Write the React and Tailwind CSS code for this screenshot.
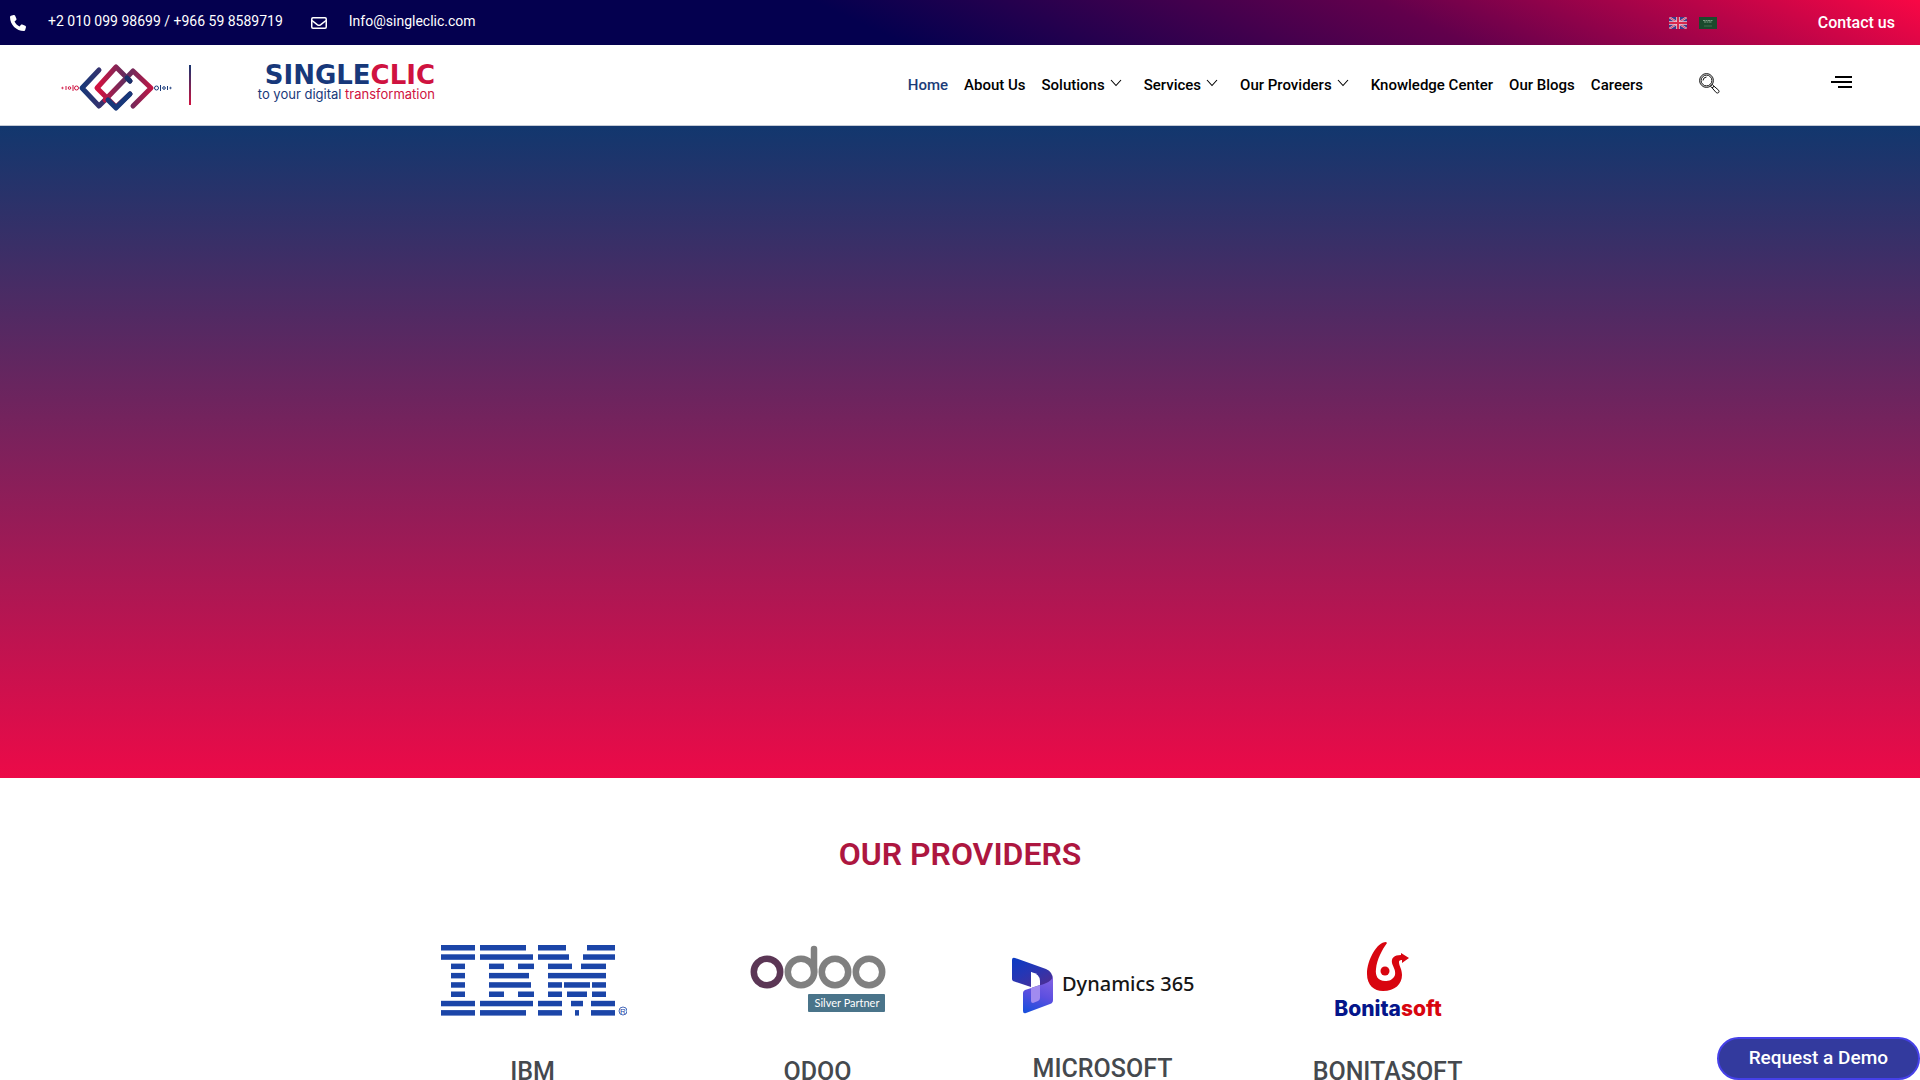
import { useState } from 'react';

const navItems = [
  { label: 'Home', href: '#home', active: true },
  { label: 'About Us', href: '#about' },
  { label: 'Solutions', href: '#solutions', menu: true },
  { label: 'Services', href: '#services', menu: true },
  { label: 'Our Providers', href: '#providers', menu: true },
  { label: 'Knowledge Center', href: '#knowledge' },
  { label: 'Our Blogs', href: '#blogs' },
  { label: 'Careers', href: '#careers' },
];

// [x, width] runs of each of the eight stripes
const ibmStripes = [
  [[0, 34], [39, 46], [97, 28], [146, 28]],
  [[0, 34], [39, 53], [97, 31], [142, 32]],
  [[10, 14], [48, 15], [77, 16], [107, 24], [140, 25]],
  [[10, 14], [48, 40], [107, 58]],
  [[10, 14], [48, 42], [107, 14], [123, 26], [151, 14]],
  [[10, 14], [48, 15], [77, 16], [107, 14], [126, 20], [151, 14]],
  [[0, 34], [39, 53], [97, 24], [130, 12], [150, 24]],
  [[0, 34], [39, 46], [97, 24], [134, 4], [150, 24]],
];

const SingleClicLogo = () => (
  <svg width="376" height="60" viewBox="0 -6 376 60" role="img" aria-label="SingleClic">
    <defs>
      <linearGradient id="scDown" x1="0" y1="0" x2="0" y2="1">
        <stop offset="0" stopColor="#17356f" />
        <stop offset="1" stopColor="#cf1240" />
      </linearGradient>
      <linearGradient id="scRight" gradientUnits="userSpaceOnUse" x1="38" y1="24" x2="92" y2="24">
        <stop offset="0" stopColor="#d01240" />
        <stop offset="0.5" stopColor="#5e2f60" />
        <stop offset="1" stopColor="#c41443" />
      </linearGradient>
      <linearGradient id="scLeft" gradientUnits="userSpaceOnUse" x1="20" y1="10" x2="72" y2="10">
        <stop offset="0" stopColor="#17387a" />
        <stop offset="0.5" stopColor="#40306a" />
        <stop offset="1" stopColor="#17387a" />
      </linearGradient>
    </defs>
    <g fill="none" strokeWidth="5" strokeLinecap="round" strokeLinejoin="round">
      <path d="M38 6 L21 24 L38 42 L44 36" stroke="url(#scLeft)" />
      <path d="M44 36 L72 7 L90 24 L72 42" stroke="url(#scRight)" />
      <path d="M69 17 L55 3 L36 24 L55 43 L69 30" stroke="url(#scRight)" />
      <path d="M47 36 L55 44 L69 30" stroke="#17387a" />
      <path d="M66 14 L69 17" stroke="#17306a" />
    </g>
    <g fill="none" strokeWidth="1">
      <g stroke="#cf1240">
        <path d="M5 22v4M12 21v6" />
        <circle cx="8.500" cy="24" r="1.3" />
        <circle cx="15.500" cy="24" r="2" />
        <circle cx="1.500" cy="24" r="0.7" />
      </g>
      <g stroke="#17387a">
        <path d="M99.500 21v6M106.500 22v4" />
        <circle cx="95.500" cy="24" r="2" />
        <circle cx="103" cy="24" r="1.3" />
        <circle cx="109.500" cy="24" r="0.7" />
      </g>
    </g>
    <rect x="128" y="1" width="2" height="40" fill="url(#scDown)" />
    <text x="374" y="20" textAnchor="end" fontFamily="DejaVu Sans, sans-serif" fontWeight="700" fontSize="26" fill="#17387a">
      SINGLE<tspan fill="#cf1240">CLIC</tspan>
    </text>
    <text x="374" y="35" textAnchor="end" fontFamily="Inter, sans-serif" fontSize="13" fill="#17387a">
      to your digital <tspan fill="#cf1240">transformation</tspan>
    </text>
  </svg>
);

const IbmLogo = () => (
  <svg width="188" height="99" viewBox="-2 -11 188 99" role="img" aria-label="IBM">
    <g fill="#1b45a8">
      {ibmStripes.map((runs, row) =>
        runs.map(([x, w]) => <rect key={`${row}-${x}`} x={x} y={row * 9.3} width={w} height="5.5" />)
      )}
    </g>
    <circle cx="182" cy="66" r="4" fill="none" stroke="#1b45a8" strokeWidth="0.8" />
    <text x="182" y="69" textAnchor="middle" fontFamily="Liberation Sans, sans-serif" fontSize="8" fill="#1b45a8">R</text>
  </svg>
);

const OdooLogo = () => (
  <svg width="137" height="99" viewBox="-1 -11 137 99" role="img" aria-label="Odoo Silver Partner">
    <g fill="none" strokeWidth="6.5" stroke="#808080">
      <circle cx="17" cy="27" r="13.200" stroke="#5b3655" />
      <circle cx="51" cy="27" r="13.200" />
      <circle cx="85" cy="27" r="13.200" />
      <circle cx="119" cy="27" r="13.200" />
      <path d="M64 27V4" strokeLinecap="round" />
    </g>
    <rect x="58" y="49" width="77" height="18" rx="1" fill="#4a748a" />
    <text x="97" y="62" textAnchor="middle" fontFamily="Lato, sans-serif" fontSize="11" fill="#ffffff">Silver Partner</text>
  </svg>
);

const DynamicsLogo = () => (
  <svg width="188" height="96" viewBox="-2 -23 188 96" role="img" aria-label="Dynamics 365">
    <defs>
      <linearGradient id="dynTop" x1="0" y1="0" x2="0.7" y2="1">
        <stop offset="0" stopColor="#0a3bc4" />
        <stop offset="0.5" stopColor="#2736b4" />
        <stop offset="1" stopColor="#4c2e94" />
      </linearGradient>
      <linearGradient id="dynBottom" x1="0.6" y1="0" x2="0.3" y2="1">
        <stop offset="0" stopColor="#8062e2" />
        <stop offset="0.5" stopColor="#5d4fe0" />
        <stop offset="1" stopColor="#1d4fdc" />
      </linearGradient>
    </defs>
    <path d="M1 3Q1 0 4 1L35 12Q42 15 42 23V31Q42 26 33 28L21 32V17Q21 15 20 15V30L2 24Q1 23 1 22Z" fill="url(#dynTop)" />
    <path d="M12 36Q12 34 14 33L33 27Q42 24 42 18V43Q42 46 39 47L15 56Q12 57 12 54Z" fill="url(#dynBottom)" />
    <path d="M20 15Q29 17 29 24V28L20 31Z" fill="#ffffff" />
    <path d="M20 31L29 28V41Q29 43 27 44L22 46Q20 46 20 44Z" fill="#a18bf0" />
    <text x="51" y="34" fontFamily="Noto Sans, sans-serif" fontWeight="500" fontSize="20" fill="#161616">Dynamics 365</text>
  </svg>
);

const BonitasoftLogo = () => (
  <svg width="120" height="99" viewBox="-5 -8 120 99" role="img" aria-label="Bonitasoft">
    <path d="M53 0C44 0 34 18 34 32C34 43 41 49 50 49C62 49 69 42 69 33C69 27 66 24 66 20C66 18 69 18 69 18V21L76 16L68 11V13C61 13 58 16 59 21C60 25 63 28 62 33C60 38 56 39 52 39C45 39 42 34 43 27C44 17 49 8 54 1Z" fill="#d8050f" />
    <circle cx="52" cy="29" r="4.500" fill="#d8050f" />
    <text x="55" y="74" textAnchor="middle" fontFamily="Inter, sans-serif" fontWeight="800" fontSize="21" fill="#04158a">
      Bonita<tspan fill="#d8050f">soft</tspan>
    </text>
  </svg>
);

const providers = [
  { name: 'IBM', Logo: IbmLogo },
  { name: 'ODOO', Logo: OdooLogo },
  { name: 'MICROSOFT', Logo: DynamicsLogo },
  { name: 'BONITASOFT', Logo: BonitasoftLogo },
];

const UkFlag = () => (
  <svg width="18" height="12" viewBox="0 0 18 12">
    <rect width="18" height="12" fill="#3c3c8c" />
    <path d="M0 0L18 12M18 0L0 12" stroke="#e8b4c8" strokeWidth="2" />
    <path d="M0 0L18 12M18 0L0 12" stroke="#d22c50" strokeWidth="0.8" />
    <path d="M9 0V12M0 6H18" stroke="#f0c4d2" strokeWidth="3.600" />
    <path d="M9 0V12M0 6H18" stroke="#d8284c" strokeWidth="2" />
  </svg>
);

const SaudiFlag = () => (
  <svg width="18" height="12" viewBox="0 0 18 12">
    <rect width="18" height="12" fill="#1b4a2c" />
    <path d="M4 3.500H14M5 5H13" stroke="#7d9c83" strokeWidth="1.200" strokeDasharray="2 0.5" />
    <path d="M5 9H13" stroke="#4f7a5a" strokeWidth="0.8" />
  </svg>
);

const Chevron = () => (
  <svg className="-mt-1 ml-[5px]" width="12" height="8" viewBox="0 0 12 8" fill="none" stroke="currentColor" strokeWidth="1.1">
    <path d="M1 1L6 6.500L11 1" />
  </svg>
);

const TopBar = () => (
  <div className="flex h-[45px] items-center bg-[linear-gradient(25deg,#04004f_45%,#62004c_73%,#f90745_100%)] pl-2.5 pr-[25px] text-white">
    <a href="tel:+201009998699" className="flex items-center text-sm">
      <svg className="mr-[22px]" width="16" height="16" viewBox="0 0 512 512" fill="currentColor">
        <path d="M164.900 24.600c-7.700-18.600-28-28.500-47.400-23.200l-88 24C12.100 30.200 0 46 0 64c0 247.400 200.600 448 448 448 18 0 33.800-12.100 38.600-29.500l24-88c5.300-19.400-4.600-39.700-23.200-47.400l-96-40c-16.300-6.800-35.200-2.100-46.300 11.600L304.700 368C234.300 334.700 177.300 277.700 144 207.300l49.300-40.300c13.700-11.200 18.400-30 11.600-46.300l-40-96z" />
      </svg>
      <span className="-mt-1">+2 010 099 98699 / +966 59 8589719</span>
    </a>
    <a href="mailto:Info@singleclic.com" className="ml-7 flex items-center text-sm">
      <svg className="mr-[22px]" width="16" height="12" viewBox="0 0 16 12" fill="none" stroke="currentColor" strokeWidth="1.500">
        <rect x="0.75" y="0.75" width="14.500" height="10.500" rx="1.200" />
        <path d="M1 3.500L6.500 7.800Q8 8.800 9.500 7.800L15 3.500" />
      </svg>
      <span className="-mt-1">Info@singleclic.com</span>
    </a>
    <div className="ml-auto flex items-center gap-3">
      <a href="#en" aria-label="English"><UkFlag /></a>
      <a href="#ar" aria-label="Arabic"><SaudiFlag /></a>
    </div>
    <a href="#contact" className="ml-[101px] text-base font-medium">Contact us</a>
  </div>
);

const Header = ({ menuOpen, onToggle }) => (
  <header className="flex h-[81px] items-center border-b border-[#c5cbd6] bg-white pl-[61px] pr-[68px]">
    <a href="#home" className="mt-1.5"><SingleClicLogo /></a>
    <nav className="ml-auto flex items-center gap-4 text-[15px] font-medium text-black">
      {navItems.map(({ label, href, active, menu }) => (
        <a key={label} href={href} className={`flex items-center ${active ? 'text-[#1b3c78]' : ''} ${menu ? 'pr-1.5' : ''}`}>
          {label}
          {menu && <Chevron />}
        </a>
      ))}
    </nav>
    <button type="button" aria-label="Search" className="mb-1 ml-14">
      <svg width="21" height="21" viewBox="0 0 21 21" fill="none" stroke="#111111" strokeWidth="1">
        <circle cx="7.500" cy="7.500" r="6.900" />
        <circle cx="7.500" cy="7.500" r="5.400" />
        <path d="M4 7.500Q4.200 4.300 7.500 4M11.500 13.200L13.200 11.500L15 13.200L13.200 15Z" />
        <path d="M13.200 15L15 13.200L19.600 17.200Q20.500 18.600 19.600 19.600Q18.500 20.500 17.200 19.600Z" />
      </svg>
    </button>
    <button type="button" aria-label="Menu" aria-expanded={menuOpen} onClick={onToggle} className="mb-1.5 ml-[111px]">
      <svg width="21" height="13" viewBox="0 0 21 13" fill="#000000">
        <rect x="4" y="0" width="17" height="2" />
        <rect x="0" y="5" width="21" height="2" />
        <rect x="7" y="10" width="14" height="2" />
      </svg>
    </button>
  </header>
);

const App = () => {
  const [menuOpen, setMenuOpen] = useState(false);

  return (
    <div className="h-screen overflow-hidden bg-white font-['Roboto',sans-serif]">
      <TopBar />
      <Header menuOpen={menuOpen} onToggle={() => setMenuOpen(!menuOpen)} />
      <section className="h-[652px] bg-[linear-gradient(180deg,#12376e_0%,#ec0a48_100%)]" />
      <section id="providers" className="pt-14">
        <h2 className="text-center text-[32px] leading-10 font-semibold text-[#ad1640]">OUR PROVIDERS</h2>
        <div className="mx-auto mt-[60px] grid max-w-[1140px] grid-cols-4">
          {providers.map(({ name, Logo }) => (
            <div key={name} className="flex flex-col items-center">
              <Logo />
              <h3 className="mt-[23px] text-[25px] leading-8 font-medium text-[#45494e]">{name}</h3>
            </div>
          ))}
        </div>
      </section>
      <button type="button" className="fixed right-0 bottom-0 h-[43px] rounded-full border-2 border-[#4540e8] bg-[#333a9e] px-[30px] text-[19px] font-medium text-white">
        Request a Demo
      </button>
    </div>
  );
};

export default App;
